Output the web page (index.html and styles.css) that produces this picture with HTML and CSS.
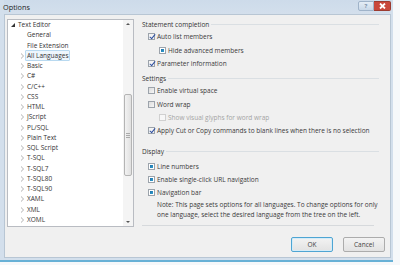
FILE: index.html
```html
<!DOCTYPE html>
<html lang="en">
<head>
    <meta charset="UTF-8">
    <title>Options</title>
    <link rel="stylesheet" href="styles.css">
</head>
<body>
    <div class="window">
        <div class="titlebar">
            <span class="title">Options</span>
            <div class="caption-buttons">
                <div class="cap-btn help">?</div>
                <div class="cap-btn btn-close">
                    <svg width="7" height="6" viewBox="0 0 7 6"><path d="M1 0.5 L6 5.5 M6 0.5 L1 5.5" stroke="#ffffff" stroke-width="1.8"/></svg>
                </div>
            </div>
        </div>

        <div class="client">
            <div class="tree">
                <ul class="tree-list">
                    <li class="node top"><span class="twisty open"></span>Text Editor</li>
                    <li class="node child"><span class="twisty none"></span>General</li>
                    <li class="node child"><span class="twisty none"></span>File Extension</li>
                    <li class="node child"><span class="twisty"></span><span class="selected">All Languages</span></li>
                    <li class="node child"><span class="twisty"></span>Basic</li>
                    <li class="node child"><span class="twisty"></span>C#</li>
                    <li class="node child"><span class="twisty"></span>C/C++</li>
                    <li class="node child"><span class="twisty"></span>CSS</li>
                    <li class="node child"><span class="twisty"></span>HTML</li>
                    <li class="node child"><span class="twisty"></span>JScript</li>
                    <li class="node child"><span class="twisty"></span>PL/SQL</li>
                    <li class="node child"><span class="twisty"></span>Plain Text</li>
                    <li class="node child"><span class="twisty"></span>SQL Script</li>
                    <li class="node child"><span class="twisty"></span>T-SQL</li>
                    <li class="node child"><span class="twisty"></span>T-SQL7</li>
                    <li class="node child"><span class="twisty"></span>T-SQL80</li>
                    <li class="node child"><span class="twisty"></span>T-SQL90</li>
                    <li class="node child"><span class="twisty"></span>XAML</li>
                    <li class="node child"><span class="twisty"></span>XML</li>
                    <li class="node child"><span class="twisty"></span>XOML</li>
                    <li class="node top"><span class="twisty"></span>Windows Forms Designer</li>
                </ul>
                <div class="scrollbar">
                    <span class="arrow up"></span>
                    <div class="track">
                        <div class="thumb"><span class="grip"></span></div>
                    </div>
                    <span class="arrow down"></span>
                </div>
            </div>

            <div class="panel">
                <div class="group-title">Statement completion</div>
                <div class="option"><span class="box checked"></span>Auto list members</div>
                <div class="option sub spaced"><span class="box filled"></span>Hide advanced members</div>
                <div class="option"><span class="box checked"></span>Parameter information</div>

                <div class="group-title settings">Settings</div>
                <div class="option"><span class="box"></span>Enable virtual space</div>
                <div class="option spaced"><span class="box"></span>Word wrap</div>
                <div class="option sub disabled"><span class="box"></span>Show visual glyphs for word wrap</div>
                <div class="option"><span class="box checked"></span>Apply Cut or Copy commands to blank lines when there is no selection</div>

                <div class="group-title display">Display</div>
                <div class="option first"><span class="box filled"></span>Line numbers</div>
                <div class="option"><span class="box filled"></span>Enable single-click URL navigation</div>
                <div class="option"><span class="box filled"></span>Navigation bar</div>

                <p class="note">Note: This page sets options for all languages. To change options for only<br>one language, select the desired language from the tree on the left.</p>

                <div class="separator"></div>

                <div class="buttons">
                    <button class="btn default">OK</button>
                    <button class="btn">Cancel</button>
                </div>
            </div>
        </div>
    </div>
</body>
</html>
```

FILE: styles.css
```css
* {
    margin: 0;
    padding: 0;
    box-sizing: border-box;
}

body {
    background: #f6f8fa;
    font-family: 'Open Sans', 'Noto Sans', sans-serif;
    font-size: 6.5px;
    color: #3a3a3a;
}

.window {
    width: 393px;
    height: 262px;
    background: #d3dfec;
    border-bottom: 2px solid #68b1d6;
    padding: 0 2px 2px 4px;
    display: flex;
    flex-direction: column;
}

.titlebar {
    height: 14px;
    display: flex;
    align-items: flex-start;
    justify-content: space-between;
    background: linear-gradient(#cddbea, #d3dfec);
}

.title {
    font-size: 7.3px;
    line-height: 14px;
    margin-left: -1px;
    color: #1e1e1e;
}

.caption-buttons {
    display: flex;
    margin-top: 1px;
}

.cap-btn {
    height: 10px;
    display: flex;
    align-items: center;
    justify-content: center;
}

.help {
    width: 16px;
    border: 1px solid #9fb3c9;
    background: linear-gradient(#e4edf6, #c8d8e8);
    border-radius: 2px 0 0 2px;
    font-size: 6px;
    line-height: 7px;
    color: #7f93ab;
    font-weight: bold;
}

.btn-close {
    width: 17px;
    border: 1px solid #9c3b30;
    border-left: none;
    border-radius: 0 2px 2px 0;
    background: #c9483c;
}

.client {
    flex: 1;
    background: #f0f0f0;
    border: 1px solid #b8c6d4;
    display: flex;
    padding: 4px 0 0 2px;
}

/* tree */
.tree {
    flex-shrink: 0;
    width: 127px;
    height: 208px;
    background: #fff;
    border: 1px solid #b9bcc2;
    display: flex;
    overflow: hidden;
}

.tree-list {
    flex: 1;
    min-width: 0;
    list-style: none;
    overflow: hidden;
}

.node {
    height: 10.25px;
    line-height: 10px;
    display: flex;
    align-items: center;
    white-space: nowrap;
    color: #333;
}

.node.top {
    padding-left: 3px;
}

.node.child {
    padding-left: 12px;
}

.twisty {
    flex-shrink: 0;
    width: 5px;
    height: 6px;
    margin-right: 2px;
    position: relative;
}

.twisty::before {
    content: "";
    position: absolute;
    left: 1px;
    top: 0;
    border-left: 3px solid #b0b0b0;
    border-top: 3px solid transparent;
    border-bottom: 3px solid transparent;
}

.twisty::after {
    content: "";
    position: absolute;
    left: 1px;
    top: 1px;
    border-left: 2px solid #fff;
    border-top: 2px solid transparent;
    border-bottom: 2px solid transparent;
}

.twisty.open::before {
    left: 0;
    top: 1px;
    border: none;
    width: 0;
    height: 0;
    border-bottom: 4px solid #333;
    border-left: 4px solid transparent;
}

.twisty.open::after,
.twisty.none::before,
.twisty.none::after {
    display: none;
}

.selected {
    margin-left: -2px;
    padding: 0 1px;
    line-height: 9px;
    background: #eef6fc;
    border: 1px solid #b8d9f0;
    border-radius: 1px;
}

.scrollbar {
    flex-shrink: 0;
    width: 10px;
    display: flex;
    flex-direction: column;
    background: #f4f4f4;
}

.arrow {
    height: 9px;
    position: relative;
}

.arrow::before {
    content: "";
    position: absolute;
    left: 3px;
    border-left: 2px solid transparent;
    border-right: 2px solid transparent;
}

.arrow.up::before {
    top: 3px;
    border-bottom: 2px solid #555;
}

.arrow.down::before {
    top: 4px;
    border-top: 2px solid #555;
}

.track {
    flex: 1;
}

.thumb {
    margin: 65px 1px 0 1px;
    height: 82px;
    border: 1px solid #b4b4b4;
    border-radius: 2px;
    background: linear-gradient(90deg, #f2f2f2, #e0e0e0);
    display: flex;
    align-items: center;
    justify-content: center;
}

.grip {
    width: 4px;
    height: 5px;
    border-top: 1px solid #aaa;
    border-bottom: 1px solid #aaa;
    background: linear-gradient(#aaa, #aaa) center / 4px 1px no-repeat;
}

/* options panel */
.panel {
    flex: 1;
    min-width: 0;
    padding: 0 11px 0 8px;
    display: flex;
    flex-direction: column;
}

.group-title {
    height: 11px;
    line-height: 11px;
    display: flex;
    align-items: center;
    color: #333;
}

.group-title::after {
    content: "";
    flex: 1;
    height: 1px;
    background: #dadfe3;
    margin-left: 2px;
}

.group-title.settings {
    margin-top: 3px;
}

.group-title.display {
    margin-top: 9px;
}

.option {
    height: 13px;
    display: flex;
    align-items: center;
    padding-left: 6px;
    white-space: nowrap;
}

.option.sub {
    padding-left: 17px;
}

.option.spaced {
    margin-top: 1px;
}

.option.first {
    margin-top: 3px;
}

.option.disabled {
    color: #a4a4a4;
}

.box {
    flex-shrink: 0;
    width: 7px;
    height: 7px;
    margin-right: 2px;
    border: 1px solid #9ca3ab;
    background: linear-gradient(135deg, #dcdcdc, #f6f6f6);
    position: relative;
}

.option.disabled .box {
    border-color: #d0d0d0;
    background: #f7f7f7;
}

.box.checked {
    background: #f4f4f4;
}

.box.checked::after {
    content: "";
    position: absolute;
    left: 2px;
    top: -1px;
    width: 2px;
    height: 5px;
    border-right: 1px solid #2d4fa0;
    border-bottom: 1px solid #2d4fa0;
    transform: rotate(40deg);
}

.box.filled {
    background: #fff;
}

.box.filled::after {
    content: "";
    position: absolute;
    left: 1px;
    top: 1px;
    right: 1px;
    bottom: 1px;
    background: linear-gradient(135deg, #1c6fa8, #33a0d0);
}

.note {
    margin-top: 1px;
    padding-left: 15px;
    line-height: 9.5px;
    white-space: nowrap;
}

.separator {
    margin: 6px 5px 0 0;
    height: 1px;
    background: #d6d9dc;
}

.buttons {
    margin: 11px -6px 0 0;
    display: flex;
    justify-content: flex-end;
    gap: 10px;
}

.btn {
    width: 42px;
    height: 15px;
    font-family: inherit;
    font-size: 6.5px;
    color: #444;
    border: 1px solid #acacac;
    border-radius: 2px;
    background: linear-gradient(#f3f3f3, #e2e2e2);
}

.btn.default {
    border-color: #4ea5d3;
    box-shadow: inset 0 0 0 1px #d4ecf8;
}
```
